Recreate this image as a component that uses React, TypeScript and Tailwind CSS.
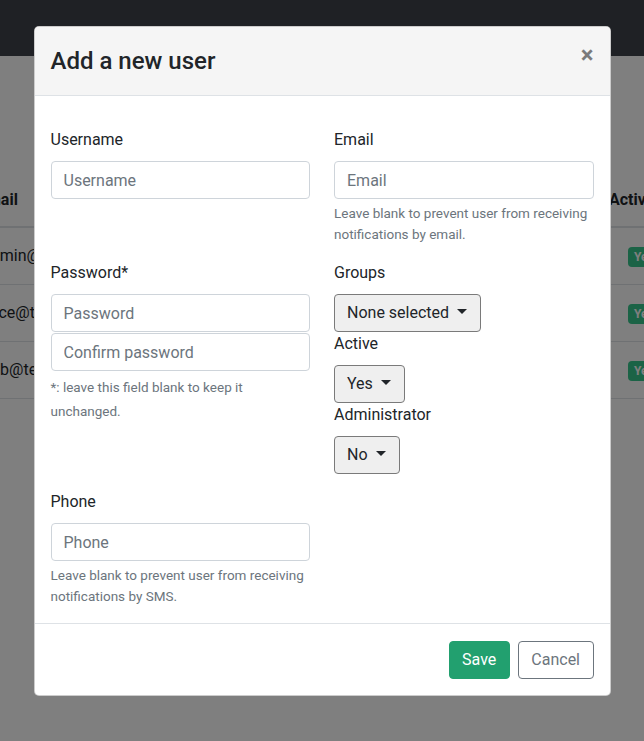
import React from "react";

function Caret() {
  return (
    <svg width="10" height="5" viewBox="0 0 10 5" className="mb-[3px] shrink-0">
      <path d="M0 0h10L5 5z" fill="#212529" />
    </svg>
  );
}

function SelectBtn({ label }: { label: string }) {
  return (
    <button
      type="button"
      className="flex h-[38px] items-center gap-2 rounded-[4px] border border-[#7a7a7a] bg-[#efefef] pl-3 pr-[13px] text-[16px] text-[#212529]"
    >
      <span>{label}</span>
      <Caret />
    </button>
  );
}

function TextInput({ placeholder }: { placeholder: string }) {
  return (
    <input
      type="text"
      placeholder={placeholder}
      className="block h-[38px] w-full rounded-[4px] border border-[#ced4da] bg-white px-3 text-[16px] text-[#495057] outline-none placeholder:text-[#6c757d]"
    />
  );
}

const rows = ["admin@test.com", "alice@test.com", "bob@test.com"];

export default function App() {
  return (
    <div className="relative min-h-screen overflow-hidden bg-white font-['Roboto',sans-serif] text-[#212529]">
      {/* page behind the modal */}
      <div className="h-14 bg-[#3e424a]" />
      <div className="pt-[118px]">
        <div className="flex h-[54px] items-center border-b-2 border-[#dee2e6] font-bold">
          <div className="-ml-[22px] w-[631px] shrink-0">Email</div>
          <div className="shrink-0">Active</div>
        </div>
        {rows.map((r) => (
          <div key={r} className="flex h-[57px] items-center border-b border-[#dee2e6]">
            <div className="-ml-[18px] w-[628px] shrink-0">{r}</div>
            <div className="shrink-0 pl-[18px]">
              <span className="rounded-[4px] bg-[#36c78c] px-[6px] py-[3px] text-[12px] font-bold text-white">
                Yes
              </span>
            </div>
          </div>
        ))}
      </div>

      {/* backdrop */}
      <div className="absolute inset-0 bg-black/50" />

      {/* modal */}
      <div className="absolute inset-0 pt-[26px]">
        <div className="mx-auto w-[577px] overflow-hidden rounded-[5px] border border-black/20 bg-white">
          <div className="flex items-start justify-between border-b border-[#dee2e6] bg-[#f5f5f5] p-4">
            <h5 className="text-[24px] font-medium leading-9 text-[#212529]">Add a new user</h5>
            <button
              type="button"
              className="-m-4 p-4 text-[24px] font-bold leading-6 text-black/50"
            >
              ×
            </button>
          </div>

          <div className="grid grid-cols-2 items-start gap-x-6 px-4 pb-4 pt-8">
            {/* row 1 */}
            <div className="mb-4">
              <label className="mb-[9px] block leading-6">Username</label>
              <TextInput placeholder="Username" />
            </div>
            <div className="mb-4">
              <label className="mb-[9px] block leading-6">Email</label>
              <TextInput placeholder="Email" />
              <p className="mt-1 text-[13.5px] leading-[21px] text-[#6c757d]">
                Leave blank to prevent user from receiving notifications by email.
              </p>
            </div>

            {/* row 2 */}
            <div className="mb-4">
              <label className="mb-[9px] block leading-6">Password*</label>
              <TextInput placeholder="Password" />
              <div className="mt-px">
                <TextInput placeholder="Confirm password" />
              </div>
              <p className="mt-1 text-[13.5px] leading-6 text-[#6c757d]">
                *: leave this field blank to keep it unchanged.
              </p>
            </div>
            <div className="mb-4">
              <label className="mb-[9px] block leading-6">Groups</label>
              <div className="flex">
                <SelectBtn label="None selected" />
              </div>
              <label className="mb-[9px] block leading-6">Active</label>
              <div className="flex">
                <SelectBtn label="Yes" />
              </div>
              <label className="mb-[9px] block leading-6">Administrator</label>
              <div className="flex">
                <SelectBtn label="No" />
              </div>
            </div>

            {/* row 3 */}
            <div>
              <label className="mb-[9px] block leading-6">Phone</label>
              <TextInput placeholder="Phone" />
              <p className="mt-1 text-[13.5px] leading-[21px] text-[#6c757d]">
                Leave blank to prevent user from receiving notifications by SMS.
              </p>
            </div>
            <div />
          </div>

          <div className="flex justify-end gap-2 border-t border-[#dee2e6] px-4 pb-4 pt-[17px]">
            <button
              type="button"
              className="h-[38px] rounded-[4px] border border-[#22a06f] bg-[#22a06f] px-[12.5px] text-[16px] text-white"
            >
              Save
            </button>
            <button
              type="button"
              className="h-[38px] rounded-[4px] border border-[#6c757d] bg-white px-[12.5px] text-[16px] text-[#6c757d]"
            >
              Cancel
            </button>
          </div>
        </div>
      </div>
    </div>
  );
}
